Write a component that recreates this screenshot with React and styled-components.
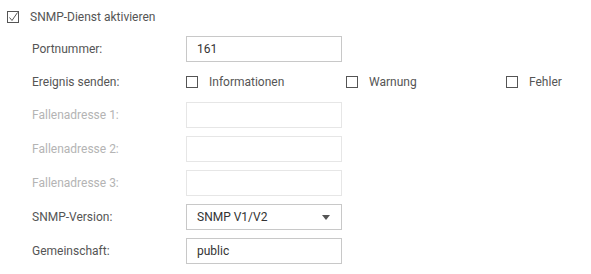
import React from "react";
import styled, { createGlobalStyle } from "styled-components";

const Global = createGlobalStyle`
  html, body { margin: 0; padding: 0; background: #fff; }
  body { font-family: Roboto, "Noto Sans", "Liberation Sans", sans-serif; font-size: 12px; color: #555; }
`;

const Page = styled.div`
  padding: 8px 0 0 7px;
  width: 591px;
  box-sizing: border-box;
`;

const Header = styled.label`
  display: flex;
  align-items: center;
  gap: 11px;
  height: 18px;
  color: #555;
`;

const Box = styled.span`
  width: 12px;
  height: 12px;
  box-sizing: border-box;
  border: 1px solid #555;
  display: inline-flex;
  align-items: center;
  justify-content: center;
  flex: none;
  position: relative;
`;

const Form = styled.div`
  margin: 10px 0 0 25px;
  display: grid;
  grid-template-columns: 154px auto;
  row-gap: 8px;
  align-items: center;
`;

const Label = styled.div`
  color: ${(p) => (p.$disabled ? "#b4b4b4" : "#555")};
  line-height: 14px;
`;

const Field = styled.div`
  width: 156px;
  height: 26px;
  box-sizing: border-box;
  border: 1px solid ${(p) => (p.$disabled ? "#e6e6e6" : "#c8c8c8")};
  background: #fff;
  display: flex;
  align-items: center;
  justify-content: space-between;
  padding: 0 11px 0 10px;
  color: #333;
  font-size: 12px;
`;

const Options = styled.div`
  display: flex;
  height: 24px;
  align-items: center;
`;

const Option = styled.label`
  width: 160px;
  display: flex;
  align-items: center;
  gap: 11px;
  color: #555;
  &:last-child { width: auto; margin-left: 0; }
`;

const Arrow = styled.span`
  width: 0;
  height: 0;
  border-left: 4px solid transparent;
  border-right: 4px solid transparent;
  border-top: 5px solid #555;
  margin-top: 1px;
`;

const Check = () => (
  <svg width="10" height="10" viewBox="0 0 10 10" style={{ position: "absolute", left: 0, top: 0 }}>
    <polyline points="1.5,5.5 4,8.5 9.5,0.5" fill="none" stroke="#555" strokeWidth="1" />
  </svg>
);

export default function App() {
  return (
    <Page>
      <Global />
      <Header>
        <Box><Check /></Box>
        <span>SNMP-Dienst aktivieren</span>
      </Header>
      <Form>
        <Label>Portnummer:</Label>
        <Field>161</Field>

        <Label>Ereignis senden:</Label>
        <Options>
          <Option><Box />Informationen</Option>
          <Option><Box />Warnung</Option>
          <Option><Box />Fehler</Option>
        </Options>

        <Label $disabled>Fallenadresse 1:</Label>
        <Field $disabled />
        <Label $disabled>Fallenadresse 2:</Label>
        <Field $disabled />
        <Label $disabled>Fallenadresse 3:</Label>
        <Field $disabled />

        <Label>SNMP-Version:</Label>
        <Field>SNMP V1/V2<Arrow /></Field>

        <Label>Gemeinschaft:</Label>
        <Field>public</Field>
      </Form>
    </Page>
  );
}
